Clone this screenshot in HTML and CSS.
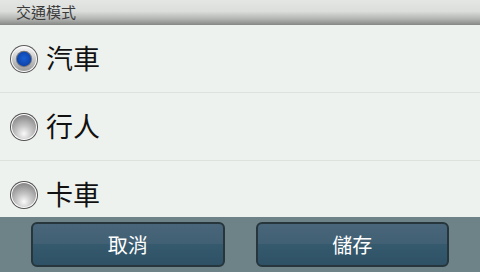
FILE: index.html
```html
<!DOCTYPE html>
<html lang="zh-Hant">
<head>
<meta charset="utf-8">
<title>交通模式</title>
<link rel="stylesheet" href="styles.css">
</head>
<body>
<div class="screen">
  <div class="header">交通模式</div>
  <div class="list">
    <div class="row">
      <svg class="radio" viewBox="0 0 30 30" width="30" height="30">
        <defs>
          <linearGradient id="silver" x1="0" y1="0" x2="0" y2="1">
            <stop offset="0" stop-color="#f6f6f6"/>
            <stop offset="0.5" stop-color="#c8c8c8"/>
            <stop offset="1" stop-color="#9a9a9a"/>
          </linearGradient>
          <radialGradient id="blue" cx="0.5" cy="0.45" r="0.6">
            <stop offset="0" stop-color="#1a5fd0"/>
            <stop offset="1" stop-color="#0a3fa8"/>
          </radialGradient>
        </defs>
        <circle cx="15" cy="15" r="14" fill="#5a5a5a"/>
        <circle cx="15" cy="15" r="13" fill="#ffffff"/>
        <circle cx="15" cy="15" r="12" fill="url(#silver)"/>
        <circle cx="15" cy="15" r="8.2" fill="#7a7a7a"/>
        <circle cx="15" cy="15" r="7.2" fill="url(#blue)"/>
      </svg>
      <span class="label">汽車</span>
    </div>
    <div class="row">
      <svg class="radio" viewBox="0 0 30 30" width="30" height="30">
        <defs>
          <radialGradient id="sphere1" cx="0.5" cy="0.78" r="0.75">
            <stop offset="0" stop-color="#fafafa"/>
            <stop offset="0.45" stop-color="#c4c4c4"/>
            <stop offset="1" stop-color="#8a8a8a"/>
          </radialGradient>
        </defs>
        <circle cx="15" cy="15" r="14" fill="#505050"/>
        <circle cx="15" cy="15" r="13" fill="#ffffff"/>
        <circle cx="15" cy="15" r="12" fill="url(#sphere1)"/>
      </svg>
      <span class="label">行人</span>
    </div>
    <div class="row">
      <svg class="radio" viewBox="0 0 30 30" width="30" height="30">
        <defs>
          <radialGradient id="sphere2" cx="0.5" cy="0.78" r="0.75">
            <stop offset="0" stop-color="#fafafa"/>
            <stop offset="0.45" stop-color="#c4c4c4"/>
            <stop offset="1" stop-color="#8a8a8a"/>
          </radialGradient>
        </defs>
        <circle cx="15" cy="15" r="14" fill="#505050"/>
        <circle cx="15" cy="15" r="13" fill="#ffffff"/>
        <circle cx="15" cy="15" r="12" fill="url(#sphere2)"/>
      </svg>
      <span class="label">卡車</span>
    </div>
  </div>
  <div class="footer">
    <div class="btn">取消</div>
    <div class="btn">儲存</div>
  </div>
</div>
</body>
</html>
```
FILE: styles.css
```css
html, body {
  margin: 0;
  padding: 0;
}
body {
  width: 480px;
  height: 272px;
  overflow: hidden;
  font-family: "Noto Sans CJK TC", "Noto Sans CJK SC", "DejaVu Sans", sans-serif;
  background: #eef2ee;
}
.screen {
  width: 480px;
  height: 272px;
  display: flex;
  flex-direction: column;
}
.header {
  height: 25px;
  flex: none;
  box-sizing: border-box;
  padding-left: 16px;
  font-size: 15px;
  line-height: 24px;
  color: #3a3a3a;
  background: linear-gradient(to bottom, #e4e6e4 0%, #dcdedc 45%, #b4b6b4 75%, #868886 100%);
}
.list {
  flex: 1;
  overflow: hidden;
  background: #eef2ee;
}
.row {
  height: 68px;
  box-sizing: border-box;
  border-bottom: 1px solid #dde2dd;
  display: flex;
  align-items: center;
  padding-left: 9px;
  gap: 7px;
}
.radio {
  flex: none;
  display: block;
}
.label {
  font-size: 27px;
  color: #111;
  line-height: 1;
  padding-bottom: 2px;
}
.footer {
  height: 55px;
  flex: none;
  box-sizing: border-box;
  background: #6d8387;
  display: flex;
  gap: 31px;
  padding: 5px 31px 5px 31px;
}
.btn {
  flex: 1;
  box-sizing: border-box;
  height: 45px;
  border: 2px solid #26363c;
  border-radius: 6px;
  background: linear-gradient(to bottom, #486579 0%, #426074 48%, #35596d 50%, #2e5166 100%);
  color: #ffffff;
  font-size: 20px;
  display: flex;
  align-items: center;
  justify-content: center;
  line-height: 1;
}
```
